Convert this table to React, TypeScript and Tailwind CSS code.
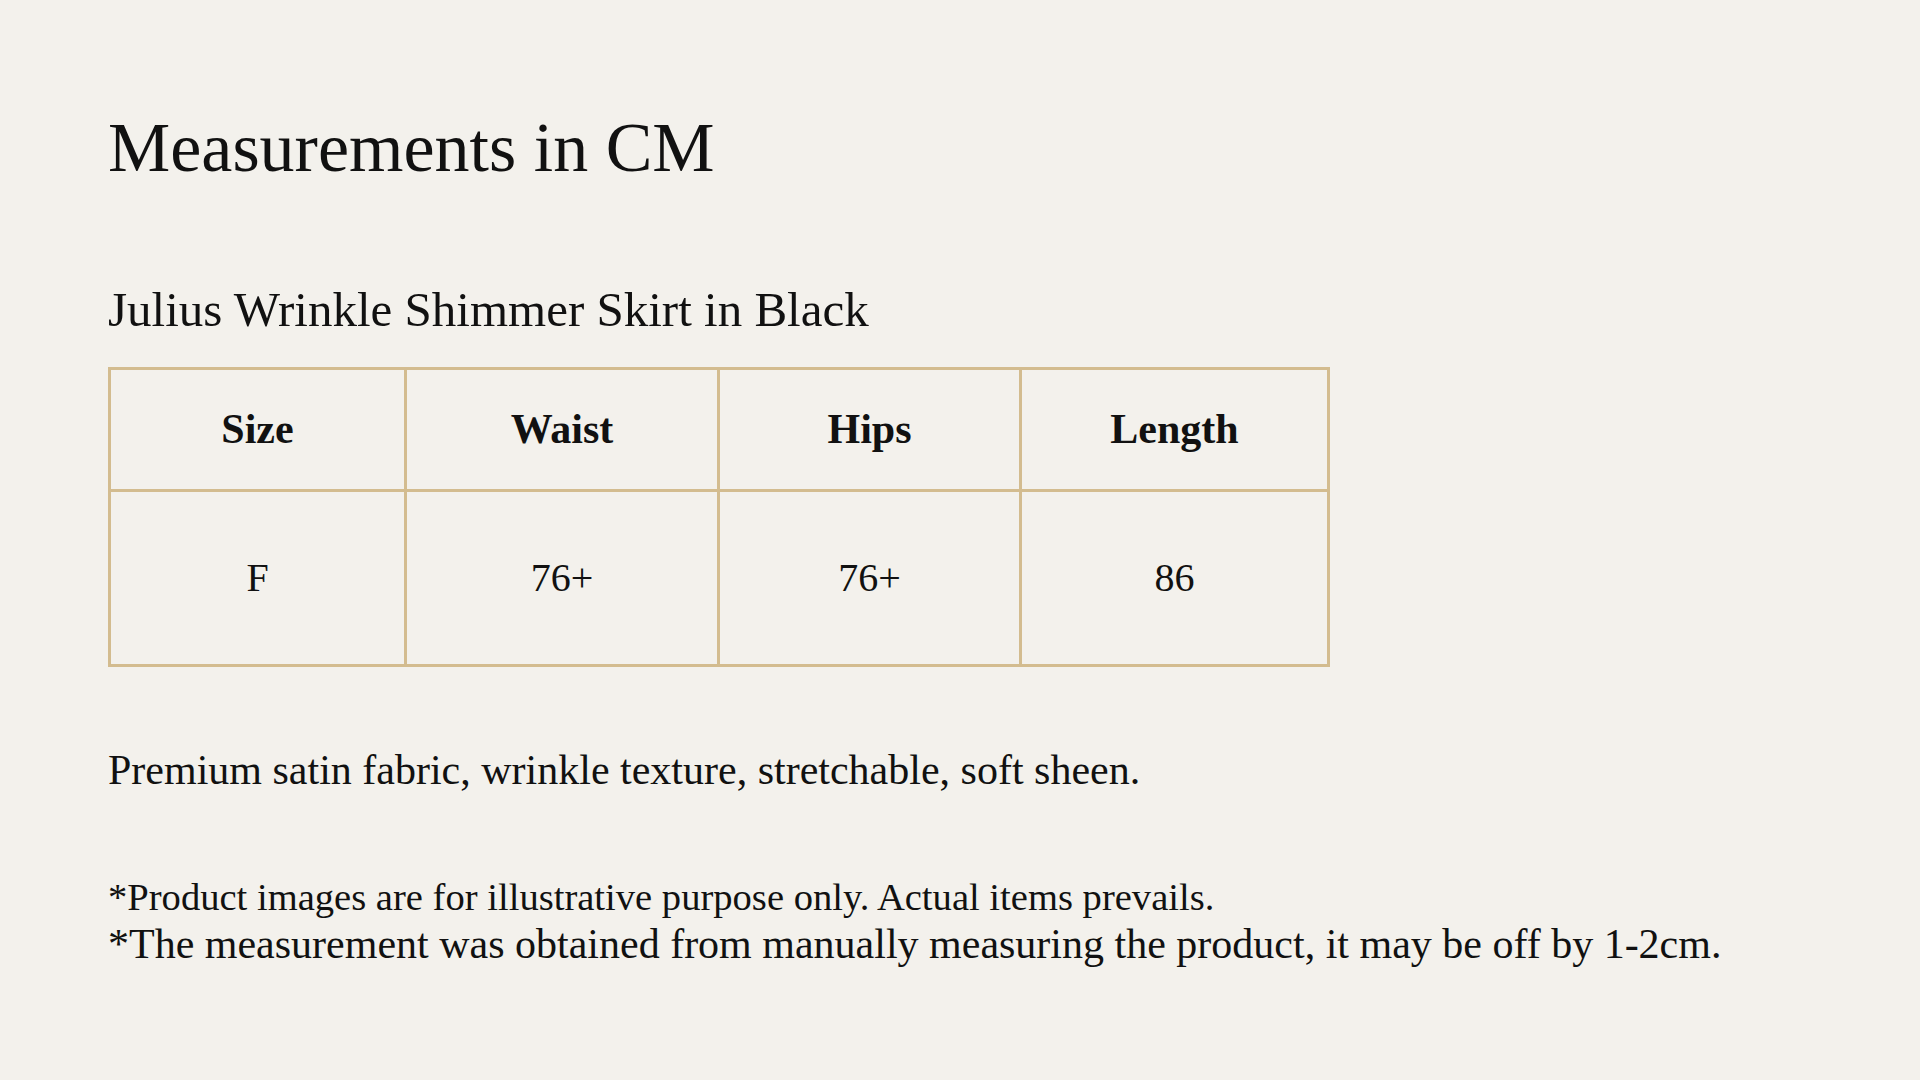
export default function App() {
  const headers = ['Size', 'Waist', 'Hips', 'Length']
  const values = ['F', '76+', '76+', '86']

  return (
    <div
      className="min-h-screen w-full bg-[#f3f1ec] text-[#111111] pl-[108px] pt-[113px]"
      style={{ fontFamily: '"Liberation Serif", "Times New Roman", serif' }}
    >
      <h1 className="text-[70px] leading-none font-normal">Measurements in CM</h1>

      <h2 className="mt-[102px] text-[49px] leading-none font-normal">
        Julius Wrinkle Shimmer Skirt in Black
      </h2>

      {/* size table */}
      <div className="mt-[33px] w-[1222px] border-[3px] border-[#d3bc8f]">
        <div className="grid grid-cols-[293px_313px_302px_308px]">
          {headers.map((h, i) => (
            <div
              key={h}
              className={`h-[119px] flex items-center justify-center text-[42px] font-bold ${
                i > 0 ? 'border-l-[3px] border-[#d3bc8f]' : ''
              }`}
            >
              {h}
            </div>
          ))}
          {values.map((v, i) => (
            <div
              key={i}
              className={`h-[175px] flex items-center justify-center text-[40px] border-t-[3px] border-[#d3bc8f] ${
                i > 0 ? 'border-l-[3px]' : ''
              }`}
            >
              {v}
            </div>
          ))}
        </div>
      </div>

      <p className="mt-[82px] text-[42px] leading-none">
        Premium satin fabric, wrinkle texture, stretchable, soft sheen.
      </p>

      <div className="mt-[87px]">
        <p className="text-[38.6px] leading-none">
          *Product images are for illustrative purpose only. Actual items prevails.
        </p>
        <p className="mt-[6px] text-[42px] leading-none">
          *The measurement was obtained from manually measuring the product, it may be off by 1-2cm.
        </p>
      </div>
    </div>
  )
}
